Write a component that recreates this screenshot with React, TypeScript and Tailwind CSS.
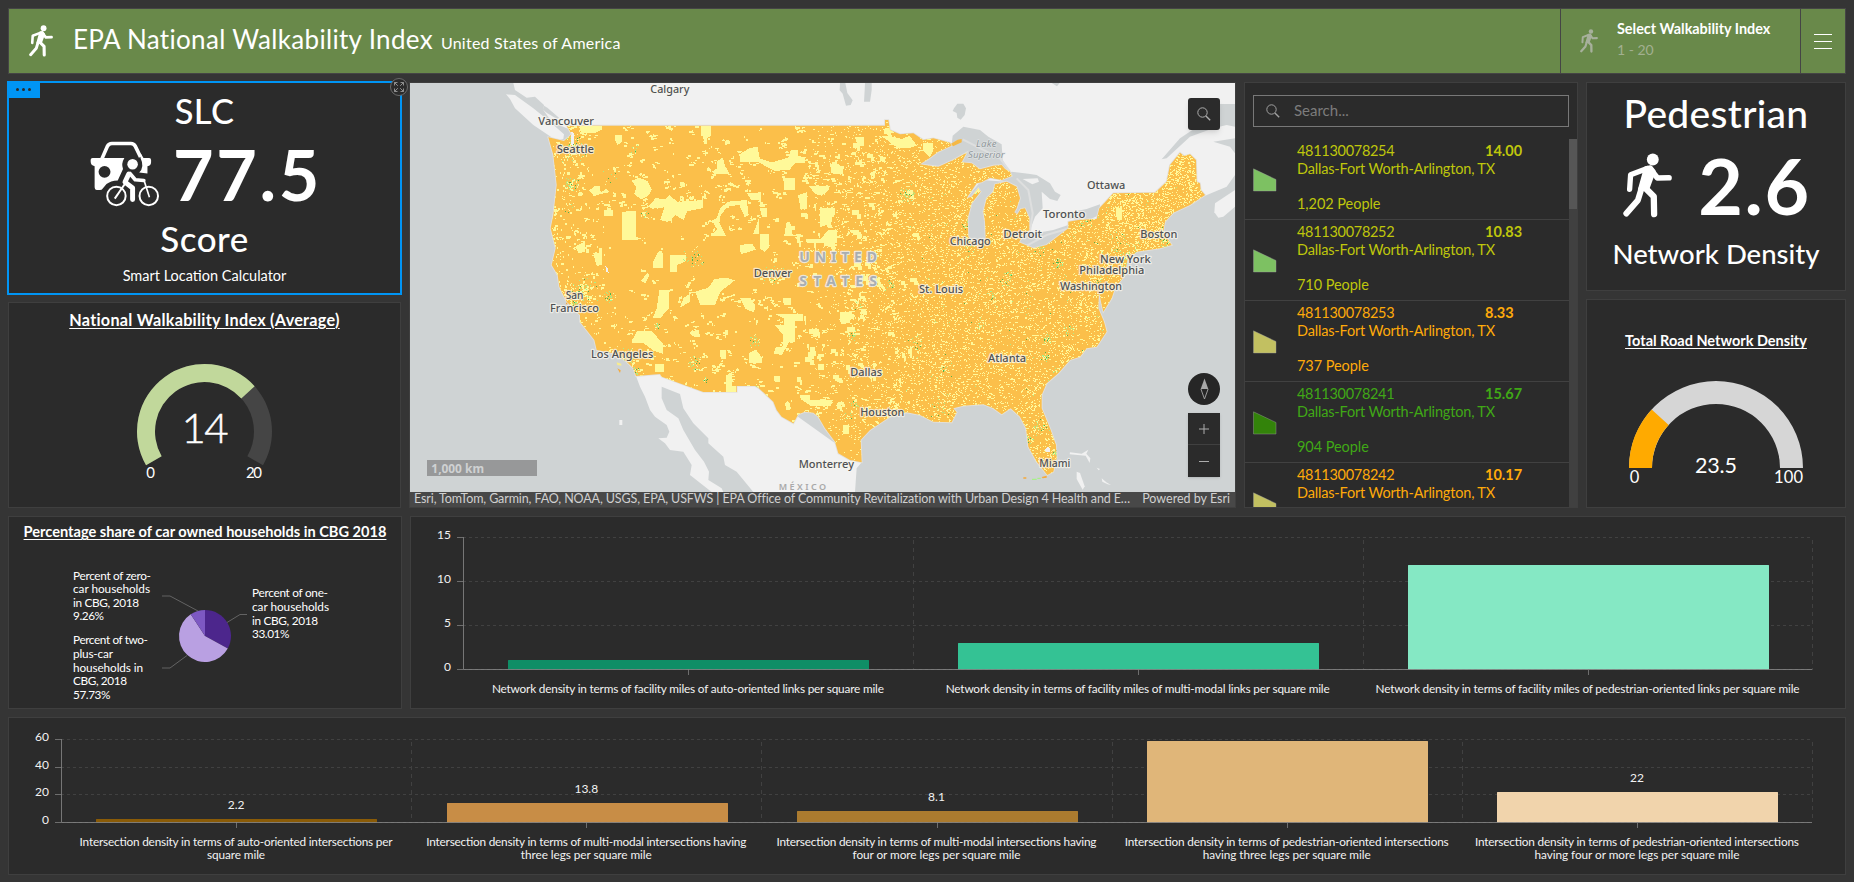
import React from "react";

/* ---------- icons ---------- */

function Walker({ className }: { className: string }) {
  return (
    <svg viewBox="247 460 148 195" className={className} fill="none" stroke="currentColor" strokeLinecap="round" strokeLinejoin="round">
      <circle cx="337" cy="479" r="18" fill="currentColor" stroke="none" />
      <path d="M320 506 L270 525 L267 569" strokeWidth="16" />
      <path d="M330 508 L351 535 L386 534" strokeWidth="17" />
      <path d="M316 505 L330 502 L340 515 L322 564 L298 570 Z" fill="currentColor" strokeWidth="12" />
      <path d="M303 566 L292 602 L257 642" strokeWidth="18" />
      <path d="M312 563 L340 591 L341 644" strokeWidth="19" />
    </svg>
  );
}

function CarBike({ className }: { className: string }) {
  return (
    <svg viewBox="268 214 212 199" className={className} fill="none" stroke="#fff">
      <path d="M303 270 L321 229 Q325 221 334 221 H392 Q401 221 405 229 L421 262" strokeWidth="11" />
      <path d="M276 265 H372 Q362 282 368 298 L352 333 Q330 334 318 344 L306 358 Q304 362 298 362 H288 Q282 362 282 354 V290 Q270 288 270 276 V270 Q270 265 276 265 Z" fill="#fff" stroke="none" />
      <path d="M421 250 L430 265 H447 Q453 265 453 271 V278 Q453 288 442 290 V312 L417 309 Q434 292 421 265 Z" fill="#fff" stroke="none" />
      <circle cx="312" cy="307" r="18" fill="#2b2b2b" stroke="none" />
      <circle cx="397" cy="284" r="16" fill="#fff" stroke="none" />
      <circle cx="348" cy="380" r="28" strokeWidth="6" fill="#2b2b2b" />
      <circle cx="446" cy="380" r="28" strokeWidth="6" fill="#2b2b2b" />
      <path d="M343 388 L374 343" strokeWidth="6" />
      <path d="M385 314 L374 338 L397 356 V391" strokeWidth="15" strokeLinejoin="round" strokeLinecap="round" />
      <path d="M389 312 L405 331 L431 333" strokeWidth="11" strokeLinejoin="round" strokeLinecap="round" />
      <path d="M432 334 L448 384" strokeWidth="5" />
    </svg>
  );
}

function Magnifier({ className }: { className: string }) {
  return (
    <svg viewBox="0 0 14 14" className={className} fill="none" stroke="currentColor">
      <circle cx="5.5" cy="5.5" r="4.7" strokeWidth="1" />
      <path d="M8.9 8.9 L13.2 13.2" strokeWidth="1.4" />
    </svg>
  );
}

/* ---------- shared pieces ---------- */

function Panel({ className, children }: { className: string; children?: React.ReactNode }) {
  return <section className={`relative shrink-0 border border-[#3f3f3f] bg-[#2b2b2b] ${className}`}>{children}</section>;
}

function ring(cx: number, cy: number, ro: number, ri: number, from: number, to: number) {
  const p = (r: number, a: number) => `${(cx + r * Math.cos((a * Math.PI) / 180)).toFixed(2)} ${(cy - r * Math.sin((a * Math.PI) / 180)).toFixed(2)}`;
  const large = Math.abs(from - to) > 180 ? 1 : 0;
  return `M${p(ro, from)} A${ro} ${ro} 0 ${large} 1 ${p(ro, to)} L${p(ri, to)} A${ri} ${ri} 0 ${large} 0 ${p(ri, from)} Z`;
}

/* ---------- map ---------- */

const US =
  "M500 152 H1455 V135 H1465 L1470 165 1500 178 1540 175 1570 195 1600 190 1650 203 1655 212 1615 230 1585 252 1560 268 1590 272 1615 275 1660 255 1700 233 1685 262 1715 265 1740 283 1780 272 1805 270 1815 282 1830 290 1835 303 1805 315 1770 308 1745 322 1730 325 1700 370 1715 365 1735 340 1742 350 1715 385 1703 430 1705 485 1730 512 1757 490 1755 440 1750 410 1760 370 1780 350 1785 328 1820 320 1850 335 1860 370 1850 400 1843 412 1852 418 1862 402 1875 400 1888 430 1888 465 1870 480 1857 502 1900 520 1940 510 2005 460 2005 440 2040 434 2090 432 2098 400 2140 355 2265 353 2300 320 2310 270 2340 233 2352 243 2370 238 2388 255 2390 320 2400 325 2402 345 2415 360 2370 390 2320 413 2295 440 2290 468 2305 495 2315 510 2280 520 2210 530 2182 555 2175 600 2145 640 2135 670 2110 710 2105 690 2097 650 2095 700 2112 740 2120 770 2090 815 2060 820 2040 845 2010 855 1975 895 1940 925 1925 960 1925 1000 1950 1060 1968 1110 1970 1150 1960 1190 1942 1200 1910 1160 1885 1115 1878 1060 1860 1025 1832 1000 1805 1018 1780 1000 1750 988 1690 992 1660 1000 1670 1012 1655 1042 1600 1040 1560 1020 1520 1012 1470 1025 1410 1065 1382 1095 1385 1162 1350 1155 1315 1135 1305 1100 1275 1060 1255 1025 1240 1013 1215 1010 1195 1018 1180 1045 1145 1025 1130 1005 1120 980 1075 938 1065 933 1010 933 V951 H910 L785 905 780 897 708 903 700 880 680 860 640 835 590 825 583 795 540 740 540 720 500 680 478 635 473 600 455 570 467 520 452 460 460 420 470 330 460 240 445 187 492 198 515 178 Z";

const LAND = [
  "M340 24 H2505 V87 H2460 L2440 130 2400 150 2340 190 2285 253 2300 250 2370 185 2440 160 2480 150 2505 155 V190 L2440 200 2490 215 2505 235 V300 L2480 335 2415 362 1900 520 1700 500 1560 268 500 160 455 140 430 105 432 90 405 65 380 68 345 45 Z",
  "M318 58 L345 60 400 100 440 132 492 178 490 192 470 197 430 170 400 150 345 100 330 72 Z",
  "M2445 385 L2505 345 V395 L2470 425 2455 428 2443 412 Z",
  "M708 903 L780 897 910 951 H1010 V933 H1065 L1385 1162 1370 1180 1365 1251 H1060 L1010 1190 975 1170 970 1145 925 1105 925 1090 880 1045 850 1000 840 957 785 935 785 970 800 1005 835 1030 850 1065 885 1125 912 1160 927 1190 925 1215 965 1240 970 1251 H935 L870 1200 875 1170 850 1130 810 1125 795 1105 775 1090 800 1088 808 1070 800 1050 765 1025 750 1005 735 965 720 935 Z",
  "M658 1035 h9 v15 h-9 Z",
  "M2010 1132 l35 4 l20 -12 l-6 12 l12 14 l-2 14 l-12 -22 l-48 -4 Z",
  "M2030 1190 l10 4 l14 40 l-6 10 l-18 -32 Z",
  "M2090 1178 l10 4 l-4 4 Z M2105 1210 l14 12 l14 8 l-10 -2 l-16 -8 Z",
];

const WATER = [
  "M1560 268 L1620 222 1655 208 1658 182 1690 155 1740 165 1765 185 1805 208 1808 255 1835 300 1760 300 1660 280 Z",
  "M1745 315 L1700 370 1695 510 1765 510 1760 380 1820 320 Z",
  "M1790 312 L1835 290 1885 296 1910 300 1950 325 1965 350 1982 360 1972 378 1950 372 1925 350 1928 400 1905 425 1890 465 1870 430 1845 420 1840 330 Z",
  "M1850 505 L1875 480 1960 465 2005 450 2010 460 1950 518 1890 525 Z",
  "M2000 430 L2030 408 2060 402 2100 388 2098 420 2060 438 Z",
  "M1320 24 h16 l6 30 l16 22 l-6 14 l-14 2 l-10 -36 l-9 -10 Z",
  "M1395 24 h20 v22 l-5 34 h-18 l2 -34 Z",
  "M1662 100 l10 -14 l18 0 l8 14 l-4 20 l-12 14 l-10 -6 l-2 -14 l-12 -6 Z",
  "M1955 24 h24 l-8 10 Z",
  "M432 92 l10 6 l35 30 l-6 4 l-30 -18 l-12 -10 Z",
];

const BLOBS =
  "M540 152h66v12l-22 10h-36l-8 -8z M903 152h30v30l-12 8v18h-8v-24h-10z M645 180h20v22l-12 8l-8 -14z M1018 238l30 -18l25 -5l6 35l36 12l50 -14l8 -24l20 2v16l22 6v16h-30l-16 20l-44 4l-28 -14l-24 -14h-52z M935 290l16 -10v-22l18 -10l6 24l14 26h-46z M697 318l20 -10l26 10l12 26l-10 18l-22 12l-20 -18l6 -18z M568 346l18 -14h14l2 22l16 -14l10 12l-30 6l-16 6z M1150 310h36v34h-34z M666 412l20 -4h22v86h-42z M612 405h28v18h-28z M745 395l22 -26l30 4l12 -12l24 20l76 -6v24l-48 10l-10 26l-24 -14l-24 20l-22 -6l12 -38l-36 4z M930 440l20 -10l10 -30l24 -20l56 -5l6 45l-12 6l-16 -36l-34 4l-22 26l-4 24l20 38l-46 2l20 -20l-12 -20z M1160 440h10l8 40l26 -4v8h-52z M1080 400h20v26h-14z M1060 476l18 -50v50z M1041 354h42v20h-30z M1080 478h26v42l-12 12l-14 -12z M1020 510l36 -4l12 18l-46 14z M526 515l28 -16v32l-18 4z M580 535h18v-16l8 0v50l-16 4z M760 560l14 -30l14 4v46h-28z M810 540h48v18l-26 12v20h-22z M722 618l22 -26l4 10l-12 22z M885 650l40 -12l18 -26l34 -4l28 8l-44 34l-16 40h-44z M778 646h30v52l-26 30h-24l12 -26z M1020 668h30l16 24l-4 20l-26 -10z M1128 718h80v20h-24v64l-16 -2l-22 40l-24 -4l4 -18l22 -4v-36l-24 -28h28v-20z M1148 670h26v20h-22z M712 768h42l34 36v32l-26 -8l-32 -24l-34 0v-8z M766 868h26v24h-26z M1048 834l20 -10l18 24v16h-38z M960 826h18v26h-16z M978 900l18 -6v40h12v16h-30z M1122 902h18v20h-16z M1200 960h30v16l70 -2l-8 18h-60l-30 -20z M1155 984l10 -6l6 26h-12z M1000 680l24 -6l0 10z M870 770l26 -6l4 22l-24 -2z M850 670l20 -14v24l-30 18z M1194 360l26 -8v50l-18 2z M1228 334h60v10l-24 18l-20 -6z M1218 492h44l20 -24h28v36h-90z M1264 400h40v20h-24l20 40h-16z M1570 204h30v20l-10 24l-20 -20z M1445 184h30l30 8l24 -10l22 30l-20 6l-40 0l-22 -18z M1365 186h26v26h-18z M1290 265l44 10l-10 24l-30 -4z M1260 395l40 20l-6 30l-34 12z M1290 465h22v38l-40 12v-20h18z M1320 710h30l16 12l-30 26h-14z M1260 975h40l-14 16h-26z M1330 1050h16v26h-16z M1340 755h24v16h-24z M2148 400h18v34h-16z M1595 255h18l6 14l-20 6z M1715 350l20 -14l6 4l-14 18z M1772 315l22 -2l-8 16h-14z M1225 832h18v20h-18z M1254 866h18v18h-18z M1255 836h16v10h-16z";

function rng(seed: number) {
  let s = seed;
  return () => {
    s = (s * 1664525 + 1013904223) % 4294967296;
    return s / 4294967296;
  };
}

function buildSpeckle() {
  const r = rng(77);
  let yellow = "";
  let green = "";
  let dark = "";
  const cell = (x: number, y: number, w: number, h: number) => `M${Math.round(x / 3) * 3} ${Math.round(y / 3) * 3}h${w * 3}v${h * 3}h${-w * 3}z`;
  for (let y = 135; y < 1205; y += 3) {
    for (let x = 1200; x < 2420; x += 3) {
      const e = Math.min(1, (x - 1200) / 400);
      const wave = Math.sin(x / 37) * Math.sin(y / 29) + Math.sin(x / 13 + y / 17) * 0.7;
      const coast = x > 2120 && y < 600 ? 0.1 : 0;
      if (r() < e * (0.115 + wave * 0.03 + coast)) yellow += cell(x, y, r() < 0.25 ? 2 : 1, 1);
    }
  }
  for (let i = 0; i < 640; i++) {
    const x = 450 + r() * 1050;
    const y = 152 + r() * 900;
    if (x < 1080 && x > 600 && y > 440 && y < 640 && r() < 0.75) continue;
    const n = 1 + Math.floor(r() * 7);
    let cx = x;
    let cy = y;
    for (let k = 0; k < n; k++) {
      yellow += cell(cx, cy, 1 + Math.floor(r() * 3), 1 + Math.floor(r() * 2));
      cx += (r() - 0.5) * 18;
      cy += (r() - 0.5) * 16;
    }
  }
  for (let i = 0; i < 170; i++) {
    const x = 1190 + r() * 360;
    const y = 155 + r() * 850;
    if (r() < (x - 1190) / 460) continue;
    const w = 2 + Math.floor(r() * 6);
    const h = 1 + Math.floor(r() * 5);
    yellow += cell(x, y, w, h) + cell(x + w * 2, y + h * 2, Math.ceil(w / 2), h);
  }
  const scatter = (cx: number, cy: number, sp: number, n: number) => {
    for (let i = 0; i < n; i++) {
      const x = cx + (r() + r() - 1) * sp;
      const y = cy + (r() + r() - 1) * sp;
      const t = r();
      if (t < 0.45) yellow += cell(x, y, 1, 1);
      else if (t < 0.86) green += cell(x, y, 1, 1);
      else dark += cell(x, y, 1, 1);
    }
  };
  const towns: [number, number, number, number][] = [
    [520, 215, 45, 90], [513, 328, 22, 40], [500, 390, 25, 12], [555, 650, 50, 60], [525, 682, 18, 24], [628, 665, 18, 40],
    [880, 545, 34, 42], [770, 752, 14, 20], [680, 850, 34, 50], [705, 885, 16, 26], [880, 862, 26, 34], [913, 912, 12, 12],
    [1062, 795, 26, 26], [1120, 600, 36, 44], [1520, 356, 26, 50], [1703, 450, 22, 34], [1700, 515, 30, 30], [1915, 520, 30, 30],
    [1972, 565, 18, 26], [1775, 660, 18, 22], [1942, 790, 16, 26], [2010, 765, 20, 20], [1935, 843, 18, 24], [1360, 780, 22, 22],
    [1378, 688, 16, 14], [1470, 628, 18, 24], [1740, 755, 16, 16], [1340, 1022, 16, 18], [1362, 990, 16, 18], [1925, 1055, 26, 40],
    [1882, 1090, 20, 24], [1965, 1130, 14, 24], [2180, 552, 34, 70], [2300, 500, 26, 40], [2090, 610, 34, 30], [1620, 1000, 30, 24],
    [1815, 620, 20, 22], [1828, 600, 18, 18], [1630, 880, 12, 14], [1975, 890, 18, 18], [700, 222, 14, 12], [640, 290, 40, 14], [735, 418, 16, 10],
    [1065, 933, 10, 10], [2060, 440, 40, 20], [1550, 800, 24, 14], [2160, 500, 70, 40],
  ];
  towns.forEach(([x, y, s, n]) => scatter(x, y, s, n));
  for (let i = 0; i < 110; i++) {
    const x = 1500 + r() * 850;
    const y = 320 + r() * 640;
    if (r() < 0.75) green += cell(x, y, 1, 1);
    else dark += cell(x, y, 1, 1);
  }
  for (let i = 0; i < 260; i++) {
    const y = 200 + r() * 640;
    const x = 455 + r() * r() * 190 + Math.max(0, (y - 600) * 0.5);
    yellow += cell(x, y, r() < 0.3 ? 2 : 1, 1 + Math.floor(r() * 2));
  }
  return { yellow, green, dark };
}

const speckle = buildSpeckle();

type Label = [string, number, number, number];
const CITIES: Label[] = [
  ["Calgary", 751, 868, 54], ["Vancouver", 415, 582, 150], ["Seattle", 470, 582, 234], ["Denver", 1061, 1176, 606],
  ["San", 497, 550, 672], ["Francisco", 450, 597, 712], ["Los Angeles", 573, 760, 850], ["Monterrey", 1196, 1362, 1180],
  ["Chicago", 1649, 1772, 510], ["Detroit", 1810, 1926, 489], ["Toronto", 1929, 2056, 428], ["Ottawa", 2061, 2176, 343],
  ["Boston", 2221, 2332, 489], ["New York", 2100, 2252, 563], ["Philadelphia", 2038, 2233, 597], ["Washington", 1980, 2166, 644],
  ["St. Louis", 1557, 1689, 655], ["Atlanta", 1764, 1878, 861], ["Dallas", 1351, 1446, 902], ["Houston", 1381, 1513, 1022], ["Miami", 1918, 2011, 1176],
];

function MapView() {
  return (
    <svg viewBox="30 24 2475 1227" className="block h-[409px] w-[825px] overflow-visible font-['Noto_Sans',sans-serif]">
      <defs>
        <clipPath id="us"><path d={US} /></clipPath>
      </defs>
      <rect x="30" y="24" width="2475" height="1227" fill="#cfd3d4" />
      {LAND.map((d) => <path key={d} d={d} fill="#f1f1f1" />)}
      {WATER.map((d) => <path key={d} d={d} fill="#cfd3d4" />)}
      <path d="M1868 312 l45 -2 l4 10 l-20 8 l-14 -8 Z" fill="#f1f1f1" />
      <path d="M1688 193 L1800 250 1830 290 M1850 310 L1885 345 1898 415 1890 470 M1880 512 L1940 480 2000 462" stroke="#dedfdf" strokeWidth="6" fill="none" />
      <path d={US} fill="#fbbf4a" stroke="#e3e1dc" strokeWidth="5" />
      <path d={US} fill="#fbbf4a" />
      <path d="M1653 206 l20 -12 l12 -2 v10 l-26 12 z" fill="#f5b845" />
      <g clipPath="url(#us)" shapeRendering="crispEdges">
        <path d={speckle.yellow} fill="#fff999" />
        <path d={BLOBS} fill="#fff999" />
        <path d={speckle.green} fill="#a8f08a" />
        <path d={speckle.dark} fill="#55b14a" />
        <path d="M505 168 l18 6 l-3 40 l-6 -4 l-2 -28 Z M616 572 l8 8 l2 14 l-8 -4 Z M1935 1122 l8 -6 l8 4 v10 h-14 Z" fill="#f1f1f1" />
      </g>
      <path d="M650 862 l14 4 l0 6 l-12 -2 Z" fill="#f8ec8c" />
      <path d="M652 880 l10 6 l-2 8 Z M498 682 l6 6 h-6 Z M1870 1207 h9 v4 h-9 Z M1925 1206 l15 -4 v6 l-12 2 Z" fill="#f5a93c" />
      <path d="M1896 1211 h14 v4 h-14 Z M1912 1208 h10 v4 h-10 Z" fill="#a8f08a" />
      <g fontSize="33" fontWeight="500" fill="#4f5153" stroke="#f7f5ee" strokeOpacity="0.75" strokeWidth="7" strokeLinejoin="round" paintOrder="stroke">
        {CITIES.map(([t, a, b, y]) => (
          <text key={t} x={a} y={y} textLength={b - a} lengthAdjust="spacingAndGlyphs">{t}</text>
        ))}
      </g>
      <g fontWeight="700" fill="#a9aeb2" stroke="#ececea" strokeOpacity="0.9" strokeWidth="7" strokeLinejoin="round" paintOrder="stroke" fontSize="42">
        <text x="1198" y="562" textLength="233">UNITED</text>
        <text x="1198" y="632" textLength="233">STATES</text>
      </g>
      <text x="1136" y="1246" textLength="142" fontSize="27" fontWeight="600" fill="#a9a9a9">MÉXICO</text>
      <g fontSize="29" fontStyle="italic" fill="#8f9699" stroke="#e4e7e8" strokeWidth="3" paintOrder="stroke">
        <text x="1728" y="216" textLength="62">Lake</text>
        <text x="1704" y="248" textLength="110">Superior</text>
      </g>
      <rect x="81" y="1155" width="330" height="48" fill="#979899" />
      <text x="94" y="1194" fontSize="35" fontWeight="700" fill="#cfd1d2" textLength="158" lengthAdjust="spacingAndGlyphs">1,000 km</text>
    </svg>
  );
}

function MapPanel() {
  return (
    <Panel className="w-[827px]">
      <MapView />
      <div className="flex h-[15px] items-center justify-between bg-[#484848] pr-[5px] pl-[4px] text-[12.5px] leading-none whitespace-nowrap text-[#d0d0d0]">
        <span className="tracking-[-0.11px]">Esri, TomTom, Garmin, FAO, NOAA, USGS, EPA, USFWS | EPA Office of Community Revitalization with Urban Design 4 Health and E…</span>
        <span>Powered by Esri</span>
      </div>
      <div className="absolute top-[15px] right-[15px] flex size-8 items-center justify-center rounded-[3px] bg-[#2b2b2b] text-[#adadad] shadow-md">
        <Magnifier className="size-[14px]" />
      </div>
      <div className="absolute right-[15px] bottom-[102px] flex size-8 items-center justify-center rounded-full bg-[#262626]">
        <svg viewBox="0 0 9 22" className="h-[22px] w-[9px]">
          <path d="M4.5 0.5 L8.3 11 H0.7 Z" fill="#a8a8a8" />
          <path d="M0.9 11 L4.5 21 L8.1 11" fill="none" stroke="#a8a8a8" strokeWidth="0.9" />
        </svg>
      </div>
      <div className="absolute right-[15px] bottom-[30px] flex w-8 flex-col bg-[#2b2b2b] shadow">
        <div className="flex h-[32px] items-center justify-center border-b border-[#404040]">
          <svg viewBox="0 0 10 10" className="size-[10px]" stroke="#adadad"><path d="M5 0 V10 M0 5 H10" /></svg>
        </div>
        <div className="flex h-[32px] items-center justify-center">
          <svg viewBox="0 0 10 10" className="size-[10px]" stroke="#adadad"><path d="M0 5.5 H10" /></svg>
        </div>
      </div>
    </Panel>
  );
}

/* ---------- list ---------- */

const ROWS = [
  { id: "481130078254", v: "14.00", p: "1,202 People", text: "text-[#bfc60c]", shape: "#7dc162" },
  { id: "481130078252", v: "10.83", p: "710 People", text: "text-[#bfc60c]", shape: "#7dc162" },
  { id: "481130078253", v: "8.33", p: "737 People", text: "text-[#ffaa0a]", shape: "#c2c061" },
  { id: "481130078241", v: "15.67", p: "904 People", text: "text-[#40a816]", shape: "#33830a" },
  { id: "481130078242", v: "10.17", p: "", text: "text-[#ffaa0a]", shape: "#c2c061" },
];

function ListPanel() {
  return (
    <Panel className="flex w-[334px] flex-col overflow-hidden">
      <div className="mx-2 mt-3 flex h-8 w-[316px] shrink-0 items-center border border-[#787878] pl-3">
        <Magnifier className="size-[14px] text-[#a0a0a0]" />
        <span className="mb-[2px] ml-[14px] text-[15px] text-[#7c7c7c]">Search...</span>
      </div>
      <div className="mt-3 flex min-h-0 grow">
        <div className="w-[325px] overflow-hidden">
          {ROWS.map((r) => (
            <div key={r.id} className={`flex h-[81px] border-b border-[#414141] pl-2 text-[14.5px] leading-[18px] ${r.text}`}>
              <svg viewBox="0 0 24 24" className="mt-[29px] size-6 shrink-0">
                <path d="M0.5 0.8 L23 11.5 V23 H0.5 Z" fill={r.shape} stroke="#a3a3a3" strokeOpacity="0.5" strokeWidth="0.8" />
              </svg>
              <div className="ml-[20px] grow pt-[3px] whitespace-nowrap">
                <div className="flex">
                  <span className="w-[188px] tracking-[-0.3px]">{r.id}</span>
                  <span className="font-bold">{r.v}</span>
                </div>
                <div className="tracking-[-0.18px]">Dallas-Fort Worth-Arlington, TX</div>
                <div className="mt-[17px] tracking-[-0.05px]">{r.p}</div>
              </div>
            </div>
          ))}
        </div>
        <div className="w-[8px] bg-[#404040]"><div className="h-[70px] bg-[#565656]" /></div>
      </div>
    </Panel>
  );
}

/* ---------- gauges and pie ---------- */

function WalkGauge() {
  return (
    <svg viewBox="0 0 391 160" className="h-[160px] w-[391px]" fill="#fff" textAnchor="middle">
      <path d={ring(195.5, 87.5, 67.5, 49.5, 210, -30)} fill="#454545" />
      <path d={ring(195.5, 87.5, 67.5, 49.5, 210, 42)} fill="#c1d89b" />
      <text x="196" y="98.5" fontSize="42" fontWeight="300" textLength="47" stroke="#fff" strokeWidth="0.5">14</text>
      <text x="141.5" y="134" fontSize="15">0</text>
      <text x="245" y="134" fontSize="15" textLength="16">20</text>
    </svg>
  );
}

function RoadGauge() {
  return (
    <svg viewBox="0 0 258 120" className="h-[120px] w-[258px]" fill="#fff" textAnchor="middle">
      <path d={ring(129, 98, 87, 64, 180, 0)} fill="#d6d6d6" />
      <path d={ring(129, 98, 87, 64, 180, 137.7)} fill="#ffaa00" />
      <text x="129" y="103" fontSize="21.5" textLength="42">23.5</text>
      <text x="47.5" y="113" fontSize="16.5">0</text>
      <text x="201.5" y="113" fontSize="16.5" textLength="29">100</text>
    </svg>
  );
}

const PIE_TEXT: [string, number, number, number][] = [
  ["Percent of zero-", 64, 62.5, 78], ["car households", 64, 76, 77], ["in CBG, 2018", 64, 89.5, 66], ["9.26%", 64, 103, 31],
  ["Percent of two-", 64, 127, 75], ["plus-car", 64, 141, 40], ["households in", 64, 155, 70], ["CBG, 2018", 64, 168, 54], ["57.73%", 64, 181.5, 37.5],
  ["Percent of one-", 243, 80, 76], ["car households", 243, 94, 77], ["in CBG, 2018", 243, 108, 66], ["33.01%", 243, 121, 37.5],
];

function slice(a: number, b: number) {
  const p = (t: number) => `${196 + 26 * Math.sin((t * Math.PI) / 180)} ${119 - 26 * Math.cos((t * Math.PI) / 180)}`;
  return `M196 119 L${p(a)} A26 26 0 ${b - a > 180 ? 1 : 0} 1 ${p(b)} Z`;
}

function Pie() {
  return (
    <svg viewBox="0 0 392 191" className="absolute inset-0 h-[191px] w-[392px]" fill="#fff" fontSize="11.8">
      <path d={slice(0, 118.8)} fill="#4c268c" />
      <path d={slice(118.8, 326.7)} fill="#b9a0e2" />
      <path d={slice(326.7, 360)} fill="#7d58c2" />
      <path d="M153 79 H161 L189 94 M238 97.5 H231 L218 105.5 M153 151 H161 L178 138.5" fill="none" stroke="#636363" />
      {PIE_TEXT.map(([t, x, y, w]) => (
        <text key={t + y} x={x} y={y} textLength={w}>{t}</text>
      ))}
    </svg>
  );
}

/* ---------- bar charts ---------- */

type Bar = { top: number; color: string; lines: [string, number][]; value?: string };

function BarChart(props: { w: number; h: number; x0: number; step: number; y0: number; ticks: [string, number][]; bars: Bar[]; labelY: number }) {
  const { w, h, x0, step, y0, ticks, bars, labelY } = props;
  const top = ticks[0][1];
  const barW = step * 0.803;
  return (
    <svg width={w} height={h} viewBox={`0 0 ${w} ${h}`} className="block" fontSize="12" fill="#f2f2f2">
      {ticks.map(([t, y]) => (
        <g key={t}>
          <path d={`M${x0} ${y + 0.5} H${x0 + step * bars.length}`} stroke="#414141" strokeDasharray="3 3" />
          <path d={`M${x0 - 6} ${y + 0.5} H${x0}`} stroke="#6e6e6e" />
          <text x={x0 - 12} y={y + 2} textAnchor="end">{t}</text>
        </g>
      ))}
      {bars.map((b, i) => (
        <path key={b.color} d={`M${Math.round(x0 + step * (i + 1)) + 0.5} ${top + 3} V${y0}`} stroke="#414141" strokeDasharray="4 4" />
      ))}
      {bars.map((b, i) => {
        const cx = x0 + step * (i + 0.5);
        return (
          <g key={b.color} textAnchor="middle">
            <rect x={Math.round(cx - barW / 2) + 1} y={b.top} width={Math.round(barW)} height={y0 - b.top + 0.5} fill={b.color} rx="0.5" />
            <path d={`M${Math.round(cx) + 0.5} ${y0} v6`} stroke="#6e6e6e" />
            {b.value && <text x={cx} y={b.top - 10}>{b.value}</text>}
            {b.lines.map(([t, len], k) => (
              <text key={t} x={cx} y={labelY + k * 13} fontSize="11.8" textLength={len}>{t}</text>
            ))}
          </g>
        );
      })}
      <path d={`M${x0 + 0.5} ${top} V${y0 + 0.5} H${x0 + step * bars.length}`} fill="none" stroke="#8a8a8a" strokeOpacity="0.8" />
    </svg>
  );
}

const NETWORK: Bar[] = [
  { top: 143, color: "#0f8e66", lines: [["Network density in terms of facility miles of auto-oriented links per square mile", 392]] },
  { top: 126, color: "#34c294", lines: [["Network density in terms of facility miles of multi-modal links per square mile", 384]] },
  { top: 48, color: "#85e8c4", lines: [["Network density in terms of facility miles of pedestrian-oriented links per square mile", 424]] },
];

const CROSSINGS: Bar[] = [
  { top: 101, color: "#8a5b07", value: "2.2", lines: [["Intersection density in terms of auto-oriented intersections per", 313], ["square mile", 58]] },
  { top: 85, color: "#c88d46", value: "13.8", lines: [["Intersection density in terms of multi-modal intersections having", 320], ["three legs per square mile", 131]] },
  { top: 93, color: "#ab7b2f", value: "8.1", lines: [["Intersection density in terms of multi-modal intersections having", 320], ["four or more legs per square mile", 168]] },
  { top: 23, color: "#e0b679", lines: [["Intersection density in terms of pedestrian-oriented intersections", 324], ["having three legs per square mile", 168]] },
  { top: 74, color: "#f1d4ac", value: "22", lines: [["Intersection density in terms of pedestrian-oriented intersections", 324], ["having four or more legs per square mile", 205]] },
];

/* ---------- page ---------- */

function Header() {
  return (
    <header className="flex h-[66px] shrink-0 border border-[#454545] bg-[#69894a] text-white">
      <div className="flex grow items-center pl-[20px]">
        <Walker className="h-[32px] w-[24px]" />
        <div className="mb-[4px] ml-[20px] flex items-baseline whitespace-nowrap">
          <h1 className="text-[26px] tracking-[0.32px]">EPA National Walkability Index</h1>
          <span className="ml-[8px] text-[16px] tracking-[0.24px]">United States of America</span>
        </div>
      </div>
      <div className="flex w-[240px] items-center border-l border-[#454545] pl-[19px]">
        <Walker className="h-[24px] w-[18px] text-[#a7b09c]" />
        <div className="mb-[5px] ml-[19px] flex flex-col gap-[2px] whitespace-nowrap">
          <span className="text-[14.4px] leading-[19px] font-bold">Select Walkability Index</span>
          <span className="text-[14px] leading-[19px] text-[#a2b090]">1 - 20</span>
        </div>
      </div>
      <div className="flex w-[45px] items-center justify-center border-l border-[#454545]">
        <div className="flex flex-col gap-[6px]">
          <div className="h-px w-[18px] bg-white" />
          <div className="h-px w-[18px] bg-white" />
          <div className="h-px w-[18px] bg-white" />
        </div>
      </div>
    </header>
  );
}

export default function App() {
  return (
    <div className="flex h-[882px] w-[1854px] flex-col gap-2 overflow-hidden bg-[#353535] p-2 font-['Lato',sans-serif] text-white">
      <Header />

      <div className="flex h-[426px] shrink-0 gap-2">
        <div className="flex w-[393px] shrink-0 flex-col gap-2">
          <Panel className="flex h-[212px] flex-col items-center">
            <div className="pointer-events-none absolute -inset-[2px] border-2 border-[#0095f5]" />
            <div className="absolute -top-[2px] -left-[2px] flex h-[17px] w-[33px] items-center justify-center gap-[3px] bg-[#0095f5]">
              <i className="size-[3px] rounded-full bg-[#2b2b2b]" />
              <i className="size-[3px] rounded-full bg-[#2b2b2b]" />
              <i className="size-[3px] rounded-full bg-[#2b2b2b]" />
            </div>
            <div className="absolute -top-[5px] -right-[8px] z-10 flex size-[18px] items-center justify-center rounded-full border border-[#6a6a6a] bg-[#2b2b2b]">
              <svg viewBox="0 0 10 10" className="size-[10px]" fill="none" stroke="#9a9a9a" strokeWidth="0.9">
                <path d="M0.5 3.5 V0.5 H3.5 M0.5 0.5 L3.8 3.8 M6.5 0.5 H9.5 V3.5 M9.5 0.5 L6.2 3.8 M0.5 6.5 V9.5 H3.5 M0.5 9.5 L3.8 6.2 M9.5 6.5 V9.5 H6.5 M9.5 9.5 L6.2 6.2" />
              </svg>
            </div>
            <div className="mt-[8px] text-[34.5px] leading-[40px] font-medium tracking-[0.4px]">SLC</div>
            <div className="mt-[6px] flex h-[74px] items-center gap-[13px]">
              <CarBike className="h-[66px] w-[70px]" />
              <span className="-mr-[3px] text-[70px] leading-[74px] font-bold tracking-[2.6px]">77.5</span>
            </div>
            <div className="mt-[7px] text-[35px] leading-[40px] font-medium tracking-[0.5px]">Score</div>
            <div className="mt-[8px] text-[14.5px] leading-[20px]">Smart Location Calculator</div>
          </Panel>
          <Panel className="flex h-[206px] flex-col items-center">
            <h2 className="mt-[6px] text-[16.2px] leading-[22px] font-bold tracking-[0.27px] whitespace-nowrap underline underline-offset-2">National Walkability Index (Average)</h2>
            <div className="mt-[13px]"><WalkGauge /></div>
          </Panel>
        </div>

        <MapPanel />
        <ListPanel />

        <div className="flex w-[260px] shrink-0 flex-col gap-2">
          <Panel className="flex h-[209px] flex-col items-center">
            <div className="mt-[8px] text-[39px] leading-[44px] font-medium tracking-[0.3px]">Pedestrian</div>
            <div className="mt-[9px] flex h-[82px] items-center gap-[26px]">
              <Walker className="h-[65px] w-[49px]" />
              <span className="-mr-[2px] text-[77px] leading-[82px] font-bold tracking-[1.6px]">2.6</span>
            </div>
            <div className="mt-[10px] text-[27.5px] leading-[36px] font-medium">Network Density</div>
          </Panel>
          <Panel className="flex h-[209px] flex-col items-center">
            <h2 className="mt-[31px] text-[14.5px] leading-[20px] font-bold underline underline-offset-2">Total Road Network Density</h2>
            <div className="mt-[19px]"><RoadGauge /></div>
          </Panel>
        </div>
      </div>

      <div className="flex h-[193px] shrink-0 gap-2">
        <Panel className="w-[394px]">
          <h2 className="mt-[5px] text-center text-[14.6px] leading-[20px] font-bold whitespace-nowrap underline underline-offset-2">Percentage share of car owned households in CBG 2018</h2>
          <Pie />
        </Panel>
        <Panel className="w-[1436px]">
          <BarChart w={1434} h={191} x0={52} step={449.8} y0={152} ticks={[["15", 20], ["10", 64], ["5", 108], ["0", 152]]} bars={NETWORK} labelY={176} />
        </Panel>
      </div>

      <Panel className="h-[158px]">
        <BarChart w={1836} h={156} x0={52} step={350.2} y0={104} ticks={[["60", 21], ["40", 49], ["20", 76], ["0", 104]]} bars={CROSSINGS} labelY={128} />
      </Panel>
    </div>
  );
}
